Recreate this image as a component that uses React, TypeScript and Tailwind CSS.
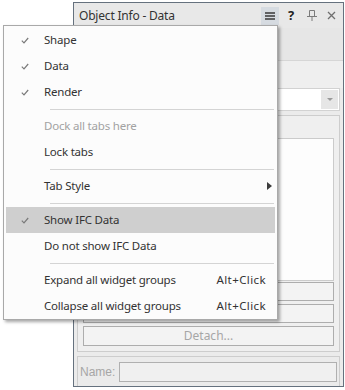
import React from "react";

type Item =
  | { kind: "item"; label: string; checked?: boolean; disabled?: boolean; active?: boolean; shortcut?: string; submenu?: boolean }
  | { kind: "sep" };

const items: Item[] = [
  { kind: "item", label: "Shape", checked: true },
  { kind: "item", label: "Data", checked: true },
  { kind: "item", label: "Render", checked: true },
  { kind: "sep" },
  { kind: "item", label: "Dock all tabs here", disabled: true },
  { kind: "item", label: "Lock tabs" },
  { kind: "sep" },
  { kind: "item", label: "Tab Style", submenu: true },
  { kind: "sep" },
  { kind: "item", label: "Show IFC Data", checked: true, active: true },
  { kind: "item", label: "Do not show IFC Data" },
  { kind: "sep" },
  { kind: "item", label: "Expand all widget groups", shortcut: "Alt+Click" },
  { kind: "item", label: "Collapse all widget groups", shortcut: "Alt+Click" },
];

const Check = () => (
  <svg width="8" height="7" viewBox="0 0 8 7" className="text-[#7a7a7a]">
    <path d="M0.8 3.6 L3 5.8 L7.2 1" fill="none" stroke="currentColor" strokeWidth="1.2" />
  </svg>
);

const ContextMenu = () => {
  return (
    <div className="absolute left-[3px] top-[25px] w-[275px] border border-[#a9a9a9] bg-[#fcfcfc] pt-[1px] text-[11.5px] tracking-[-0.2px] shadow-[2px_2px_3px_rgba(0,0,0,0.35)]">
      {items.map((it, i) =>
        it.kind === "sep" ? (
          <div key={i} className="flex h-[8px] items-center pl-[46px] pr-[3px]">
            <div className="h-px w-full bg-[#d4d4d4]" />
          </div>
        ) : (
          <div
            key={i}
            className={
              "mx-[2px] flex h-[26px] items-center " +
              (it.active ? "bg-[#cfcfcf] " : "") +
              (it.disabled ? "text-[#a2a2a2]" : "text-[#333333]")
            }
          >
            <div className="flex w-[38px] justify-center pr-[1px]">{it.checked && <Check />}</div>
            <span className="flex-1">{it.label}</span>
            {it.shortcut && <span className="mr-[9px] tracking-[0.4px]">{it.shortcut}</span>}
            {it.submenu && (
              <svg width="5" height="8" viewBox="0 0 5 8" className="mr-[3px]">
                <path d="M0 0 L5 4 L0 8 Z" fill="#3c3c3c" />
              </svg>
            )}
          </div>
        )
      )}
    </div>
  );
};

const PanelButton = ({ label, h }: { label?: string; h: string }) => (
  <div className={"flex items-center justify-center border border-[#adadad] bg-[#f3f3f3] text-[#a6a6a6] " + h}>
    {label}
  </div>
);

export default function App() {
  return (
    <div
      className="relative h-[390px] w-[345px] overflow-hidden bg-white text-[12px]"
      style={{ fontFamily: '"Noto Sans", "Open Sans", sans-serif' }}
    >
      {/* panel window */}
      <div className="ml-[73px] mt-[2px] flex h-[385px] w-[271px] flex-col border border-[#65717e] bg-[#ebebeb]">
        <div className="flex h-[25px] items-center bg-[#e8e8e8] pl-[5px]">
          <span className="flex-1 text-[12px] tracking-[-0.2px] text-[#333333]">Object Info - Data</span>
          <div className="flex h-[18px] w-[18px] items-center justify-center bg-[#d6dbe1]">
            <svg width="10" height="8" viewBox="0 0 10 8">
              <path d="M0 1h10M0 4h10M0 7h10" stroke="#3a3a3a" strokeWidth="1.5" />
            </svg>
          </div>
          <span className="ml-[9px] w-[10px] text-[13px] font-bold text-[#222]">?</span>
          <svg width="10" height="11" viewBox="0 0 10 11" className="ml-[9px] text-[#7b7b7b]">
            <path d="M2.5 0.5h5v6h-5z M0 6.5h10 M5 6.5v4.5" fill="none" stroke="currentColor" strokeWidth="1" />
          </svg>
          <svg width="9" height="9" viewBox="0 0 9 9" className="ml-[10px] mr-[7px] text-[#6f6f6f]">
            <path d="M1 1l7 7M8 1l-7 7" stroke="currentColor" strokeWidth="1.3" />
          </svg>
        </div>
        <div className="h-[32px] bg-[#e6e6e6]" />
        <div className="h-[28px] border-t border-[#d6d6d6] bg-[#efefef]" />
        <div className="flex flex-1 flex-col px-[3px]">
          <div className="flex h-[23px] items-center justify-end border border-[#d2d2d2] bg-white pr-[1px]">
            <div className="flex h-[19px] w-[17px] items-center justify-center bg-[#e6e6e6]">
              <svg width="6" height="3" viewBox="0 0 6 3">
                <path d="M0 0h6L3 3z" fill="#9a9a9a" />
              </svg>
            </div>
          </div>
          <div className="mt-[4px] flex h-[237px] flex-col border border-[#cdcdcd] bg-[#efefef] px-[5px] pb-[4px]">
            <div className="h-[22px]" />
            <div className="h-[143px] border border-[#cbcbcb] bg-[#fdfdfd]" />
            <div className="mt-[1px] flex flex-col gap-[3px]">
              <PanelButton h="h-[19px]" />
              <PanelButton h="h-[19px]" />
              <PanelButton h="h-[20px]" label="Detach..." />
            </div>
          </div>
          <div
            className="mt-[4px] flex flex-1 items-center gap-[4px] border-l border-r border-t border-[#cdcdcd] px-[2px] text-[#a6a6a6]"
            style={{ fontFamily: '"Liberation Sans", Arial, sans-serif' }}
          >
            <span>Name:</span>
            <div className="h-[20px] flex-1 border border-[#b0b0b0] bg-[#f0f0f0]" />
          </div>
        </div>
      </div>
      <ContextMenu />
    </div>
  );
}
